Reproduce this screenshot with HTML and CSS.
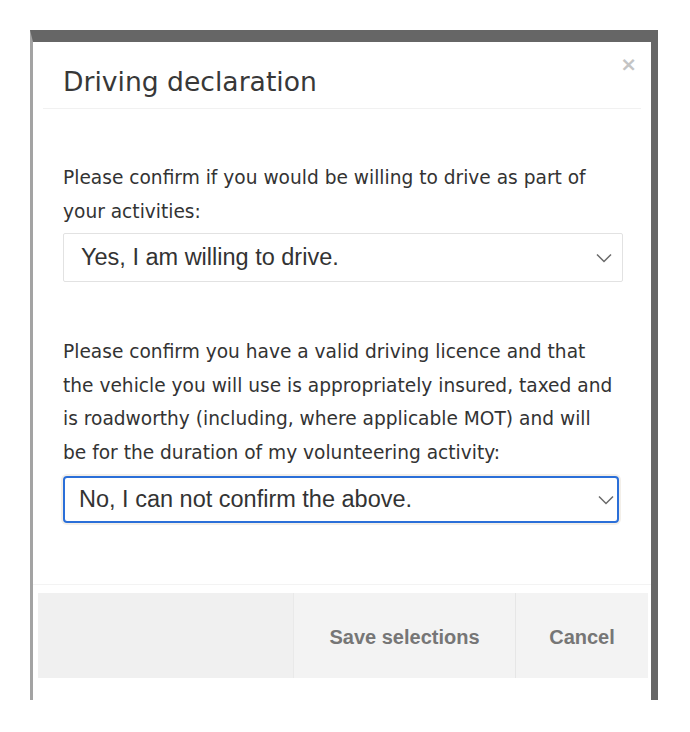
FILE: index.html
```html
<!DOCTYPE html>
<html>
<head>
<meta charset="utf-8">
<link rel="stylesheet" href="styles.css">
</head>
<body>
<div class="page">
  <div class="frame">
    <div class="modal">
      <div class="header">
        <h1 class="title">Driving declaration</h1>
        <span class="close">×</span>
      </div>
      <div class="body">
        <p class="label">Please confirm if you would be willing to drive as part of your activities:</p>
        <div class="select">
          <span>Yes, I am willing to drive.</span>
          <svg class="chev" width="16" height="10" viewBox="0 0 16 10"><path d="M1 1.5 L8 8.5 L15 1.5" fill="none" stroke="#6a6a6a" stroke-width="1.5"/></svg>
        </div>
        <p class="label second">Please confirm you have a valid driving licence and that the vehicle you will use is appropriately insured, taxed and is roadworthy (including, where applicable MOT) and will be for the duration of my volunteering activity:</p>
        <div class="select focused">
          <span>No, I can not confirm the above.</span>
          <svg class="chev" width="16" height="10" viewBox="0 0 16 10"><path d="M1 1.5 L8 8.5 L15 1.5" fill="none" stroke="#6a6a6a" stroke-width="1.5"/></svg>
        </div>
      </div>
      <div class="footer">
        <div class="spacer"></div>
        <div class="btn save">Save selections</div>
        <div class="btn cancel">Cancel</div>
      </div>
    </div>
  </div>
</div>
</body>
</html>
```
FILE: styles.css
```css
html, body {
  margin: 0;
  padding: 0;
  background: #ffffff;
}
.page {
  padding: 30px 0 0 30px;
}
.frame {
  width: 618px;
  height: 658px;
  border-top: 12px solid #666666;
  border-left: 3px solid #a3a3a3;
  border-right: 7px solid #666666;
  background: #ffffff;
}
.modal {
  height: 658px;
  display: flex;
  flex-direction: column;
}
.header {
  height: 66px;
  display: flex;
  justify-content: space-between;
  align-items: flex-start;
  border-bottom: 1px solid #f1f1f1;
  margin: 0 10px 0 10px;
}
.title {
  margin: 24px 0 0 20px;
  font-family: "DejaVu Sans", Verdana, sans-serif;
  font-weight: normal;
  font-size: 26.6px;
  line-height: 32px;
  color: #383838;
}
.close {
  margin: 10px 4px 0 0;
  font-family: "DejaVu Sans", sans-serif;
  font-size: 20px;
  font-weight: bold;
  color: #c4c4c4;
  line-height: 24px;
}
.body {
  padding: 52px 34px 0 30px;
  height: 423px;
  border-bottom: 1px solid #f3f3f3;
}
.label {
  margin: 0;
  font-family: "DejaVu Sans", Verdana, sans-serif;
  font-size: 18.6px;
  line-height: 33.5px;
  color: #333333;
}
.label.second {
  margin-top: 53px;
}
.select {
  margin-top: 5px;
  height: 47px;
  border: 1px solid #e2e2e2;
  border-radius: 2px;
  display: flex;
  align-items: center;
  justify-content: space-between;
  padding: 0 10px 0 17px;
  font-family: "Liberation Sans", Arial, sans-serif;
  font-size: 23.5px;
  color: #333333;
  width: 531px;
  flex-shrink: 0;
}
.select.focused {
  margin-top: 7px;
  height: 43px;
  border: 2px solid #2b6fd8;
  border-radius: 4px;
  box-shadow: 0 0 0 2px #f3efe9;
  width: 535px;
  padding: 0 3px 0 14px;
}
.chev {
  display: block;
}
.footer {
  margin: 8px 3px 0 5px;
  height: 85px;
  display: flex;
  background: #f3f3f3;
}
.spacer {
  width: 255px;
  background: #f0f0f0;
  border-right: 1px solid #e9e9e9;
}
.btn {
  display: flex;
  align-items: center;
  justify-content: center;
  font-family: "Liberation Sans", Arial, sans-serif;
  font-weight: bold;
  font-size: 20px;
  color: #767676;
  padding-top: 4px;
}
.save {
  width: 221px;
  border-right: 1px solid #e6e6e6;
}
.cancel {
  flex: 1;
}
```
